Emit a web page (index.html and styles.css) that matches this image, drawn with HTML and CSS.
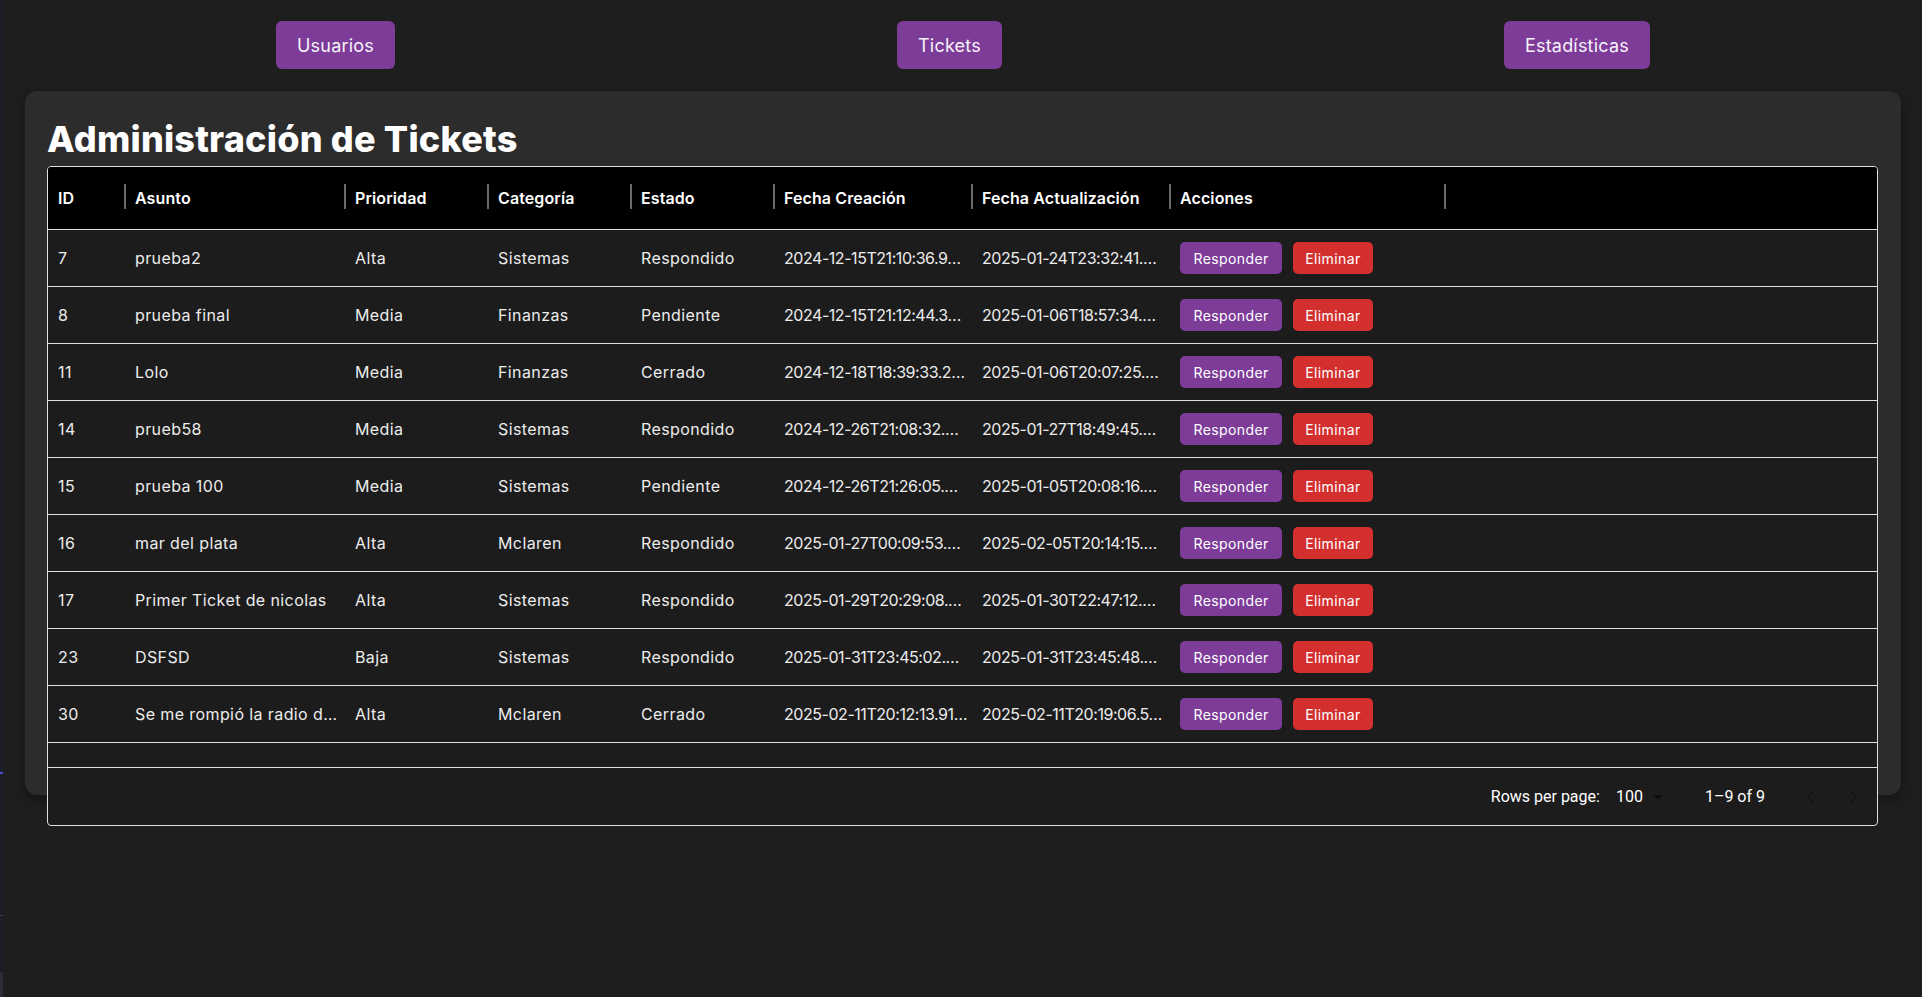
FILE: index.html
```html
<!DOCTYPE html>
<html lang="es">
<head>
<meta charset="utf-8">
<title>Administración de Tickets</title>
<link rel="stylesheet" href="styles.css">
</head>
<body>
<div class="edge"></div>
<div class="main">
  <nav class="nav">
    <button class="nav-btn">Usuarios</button>
    <button class="nav-btn">Tickets</button>
    <button class="nav-btn">Estadísticas</button>
  </nav>
  <section class="card">
    <h1 class="title">Administración de Tickets</h1>
    <div class="grid">
      <div class="grid-row grid-head">
        <div class="hcell">ID</div>
        <div class="hcell">Asunto</div>
        <div class="hcell">Prioridad</div>
        <div class="hcell">Categoría</div>
        <div class="hcell">Estado</div>
        <div class="hcell">Fecha Creación</div>
        <div class="hcell">Fecha Actualización</div>
        <div class="hcell">Acciones</div>
        <div class="fill"></div>
      </div>

      <div class="grid-row body-row">
        <div class="cell">7</div><div class="cell">prueba2</div><div class="cell">Alta</div><div class="cell">Sistemas</div><div class="cell">Respondido</div>
        <div class="cell date">2024-12-15T21:10:36.9…</div><div class="cell date">2025-01-24T23:32:41.…</div>
        <div class="cell actions"><button class="btn btn-primary">Responder</button><button class="btn btn-danger">Eliminar</button></div><div class="fill"></div>
      </div>
      <div class="grid-row body-row">
        <div class="cell">8</div><div class="cell">prueba final</div><div class="cell">Media</div><div class="cell">Finanzas</div><div class="cell">Pendiente</div>
        <div class="cell date">2024-12-15T21:12:44.3…</div><div class="cell date">2025-01-06T18:57:34.…</div>
        <div class="cell actions"><button class="btn btn-primary">Responder</button><button class="btn btn-danger">Eliminar</button></div><div class="fill"></div>
      </div>
      <div class="grid-row body-row">
        <div class="cell">11</div><div class="cell">Lolo</div><div class="cell">Media</div><div class="cell">Finanzas</div><div class="cell">Cerrado</div>
        <div class="cell date">2024-12-18T18:39:33.2…</div><div class="cell date">2025-01-06T20:07:25.…</div>
        <div class="cell actions"><button class="btn btn-primary">Responder</button><button class="btn btn-danger">Eliminar</button></div><div class="fill"></div>
      </div>
      <div class="grid-row body-row">
        <div class="cell">14</div><div class="cell">prueb58</div><div class="cell">Media</div><div class="cell">Sistemas</div><div class="cell">Respondido</div>
        <div class="cell date">2024-12-26T21:08:32.…</div><div class="cell date">2025-01-27T18:49:45.…</div>
        <div class="cell actions"><button class="btn btn-primary">Responder</button><button class="btn btn-danger">Eliminar</button></div><div class="fill"></div>
      </div>
      <div class="grid-row body-row">
        <div class="cell">15</div><div class="cell">prueba 100</div><div class="cell">Media</div><div class="cell">Sistemas</div><div class="cell">Pendiente</div>
        <div class="cell date">2024-12-26T21:26:05.…</div><div class="cell date">2025-01-05T20:08:16.…</div>
        <div class="cell actions"><button class="btn btn-primary">Responder</button><button class="btn btn-danger">Eliminar</button></div><div class="fill"></div>
      </div>
      <div class="grid-row body-row">
        <div class="cell">16</div><div class="cell">mar del plata</div><div class="cell">Alta</div><div class="cell">Mclaren</div><div class="cell">Respondido</div>
        <div class="cell date">2025-01-27T00:09:53.…</div><div class="cell date">2025-02-05T20:14:15.…</div>
        <div class="cell actions"><button class="btn btn-primary">Responder</button><button class="btn btn-danger">Eliminar</button></div><div class="fill"></div>
      </div>
      <div class="grid-row body-row">
        <div class="cell">17</div><div class="cell">Primer Ticket de nicolas</div><div class="cell">Alta</div><div class="cell">Sistemas</div><div class="cell">Respondido</div>
        <div class="cell date">2025-01-29T20:29:08.…</div><div class="cell date">2025-01-30T22:47:12.…</div>
        <div class="cell actions"><button class="btn btn-primary">Responder</button><button class="btn btn-danger">Eliminar</button></div><div class="fill"></div>
      </div>
      <div class="grid-row body-row">
        <div class="cell">23</div><div class="cell">DSFSD</div><div class="cell">Baja</div><div class="cell">Sistemas</div><div class="cell">Respondido</div>
        <div class="cell date">2025-01-31T23:45:02.…</div><div class="cell date">2025-01-31T23:45:48.…</div>
        <div class="cell actions"><button class="btn btn-primary">Responder</button><button class="btn btn-danger">Eliminar</button></div><div class="fill"></div>
      </div>
      <div class="grid-row body-row">
        <div class="cell">30</div><div class="cell">Se me rompió la radio d…</div><div class="cell">Alta</div><div class="cell">Mclaren</div><div class="cell">Cerrado</div>
        <div class="cell date">2025-02-11T20:12:13.91…</div><div class="cell date">2025-02-11T20:19:06.5…</div>
        <div class="cell actions"><button class="btn btn-primary">Responder</button><button class="btn btn-danger">Eliminar</button></div><div class="fill"></div>
      </div>

      <div class="grid-spacer"></div>

      <div class="grid-footer">
        <span class="pg-label">Rows per page:</span>
        <div class="pg-select">
          <span>100</span>
          <svg class="pg-drop" viewBox="0 0 24 24" width="24" height="24"><path d="M7 10l5 5 5-5z"/></svg>
        </div>
        <span class="pg-range">1–9 of 9</span>
        <div class="pg-actions">
          <button class="icon-btn" disabled><svg viewBox="0 0 24 24" width="24" height="24"><path d="M15.41 16.59 10.83 12l4.58-4.59L14 6l-6 6 6 6z"/></svg></button>
          <button class="icon-btn" disabled><svg viewBox="0 0 24 24" width="24" height="24"><path d="M8.59 16.59 13.17 12 8.59 7.41 10 6l6 6-6 6z"/></svg></button>
        </div>
      </div>
    </div>
  </section>
</div>
</body>
</html>
```

FILE: styles.css
```css
* {
  box-sizing: border-box;
}

html, body {
  margin: 0;
  padding: 0;
}

body {
  background: #1e1e1e;
  color: #ececec;
  font-family: Inter, "Open Sans", "Liberation Sans", sans-serif;
  display: flex;
  min-height: 100vh;
  overflow: hidden;
}

.edge {
  flex: 0 0 3px;
  background:
    linear-gradient(#4b4fd8, #4b4fd8) 0 772px / 100% 2px no-repeat,
    linear-gradient(#3a3d46, #3a3d46) 0 915px / 100% 1px no-repeat,
    linear-gradient(#2a2d35, #2a2d35) 0 972px / 100% 25px no-repeat,
    #1c1e25;
}

.main {
  flex: 1;
  padding: 0 21px 0 22px;
}

/* top navigation */
.nav {
  display: flex;
  justify-content: space-around;
  align-items: center;
  padding-top: 21px;
  margin-bottom: 22px;
}

.nav-btn {
  height: 48px;
  padding: 0 21px;
  border: none;
  border-radius: 6px;
  background: #7d3c98;
  color: #f7f2fa;
  font-family: inherit;
  font-size: 18px;
  letter-spacing: 0.2px;
  cursor: pointer;
}

/* card */
.card {
  height: 704px;
  background: #2c2c2c;
  border-radius: 12px;
  padding: 26px 23px 0 22px;
  box-shadow: 0 4px 12px rgba(0, 0, 0, 0.35);
}

.title {
  margin: 0 0 5px 0;
  font-size: 36px;
  line-height: 44px;
  font-weight: 800;
  color: #ffffff;
  letter-spacing: 0.2px;
}

/* data grid */
.grid {
  border: 1px solid #e0e0e0;
  border-radius: 4px;
  background: #1c1c1c;
  overflow: hidden;
}

.grid-row {
  display: grid;
  grid-template-columns: 77px 220px 143px 143px 143px 198px 198px 275px 1fr;
}

.grid-head {
  height: 63px;
  background: #000000;
  border-bottom: 1px solid #e0e0e0;
}

.hcell {
  position: relative;
  display: flex;
  align-items: center;
  padding: 0 10px;
  font-size: 16px;
  font-weight: 600;
  color: #ffffff;
  letter-spacing: 0.1px;
  white-space: nowrap;
}

.hcell::after {
  content: "";
  position: absolute;
  right: -1px;
  top: 17px;
  width: 2px;
  height: 25px;
  background: #6a6a6a;
}

.body-row {
  height: 57px;
  border-bottom: 1px solid #e0e0e0;
}

.cell {
  display: flex;
  align-items: center;
  padding: 0 10px;
  font-size: 16px;
  letter-spacing: 0.4px;
  color: #ececec;
  white-space: nowrap;
  overflow: hidden;
  min-width: 0;
}

.date {
  letter-spacing: -0.45px;
}

.actions {
  gap: 11px;
  overflow: visible;
}

.btn {
  height: 32px;
  padding: 0 12px;
  border: none;
  border-radius: 5px;
  color: #ffffff;
  font-family: inherit;
  font-size: 14px;
  letter-spacing: 0.4px;
  cursor: pointer;
}

.btn-primary {
  background: #7d3c98;
  padding: 0 13.5px;
}

.btn-danger {
  background: #d32f2f;
}

.grid-spacer {
  height: 25px;
  border-bottom: 1px solid #e0e0e0;
}

/* footer / pagination */
.grid-footer {
  height: 57px;
  display: flex;
  align-items: center;
  justify-content: flex-end;
  padding-right: 3px;
  font-family: Roboto, "Liberation Sans", sans-serif;
  font-size: 16px;
  color: #ffffff;
}

.pg-select {
  display: flex;
  align-items: center;
  margin-left: 16px;
  margin-right: 35px;
}

.pg-select span {
  margin-right: 3px;
}

.pg-drop {
  fill: #0e0e0e;
}

.pg-actions {
  display: flex;
  gap: 4px;
  margin-left: 25px;
}

.icon-btn {
  width: 40px;
  height: 40px;
  padding: 8px;
  border: none;
  background: transparent;
  display: flex;
  align-items: center;
  justify-content: center;
}

.icon-btn svg {
  fill: #151515;
}
```
